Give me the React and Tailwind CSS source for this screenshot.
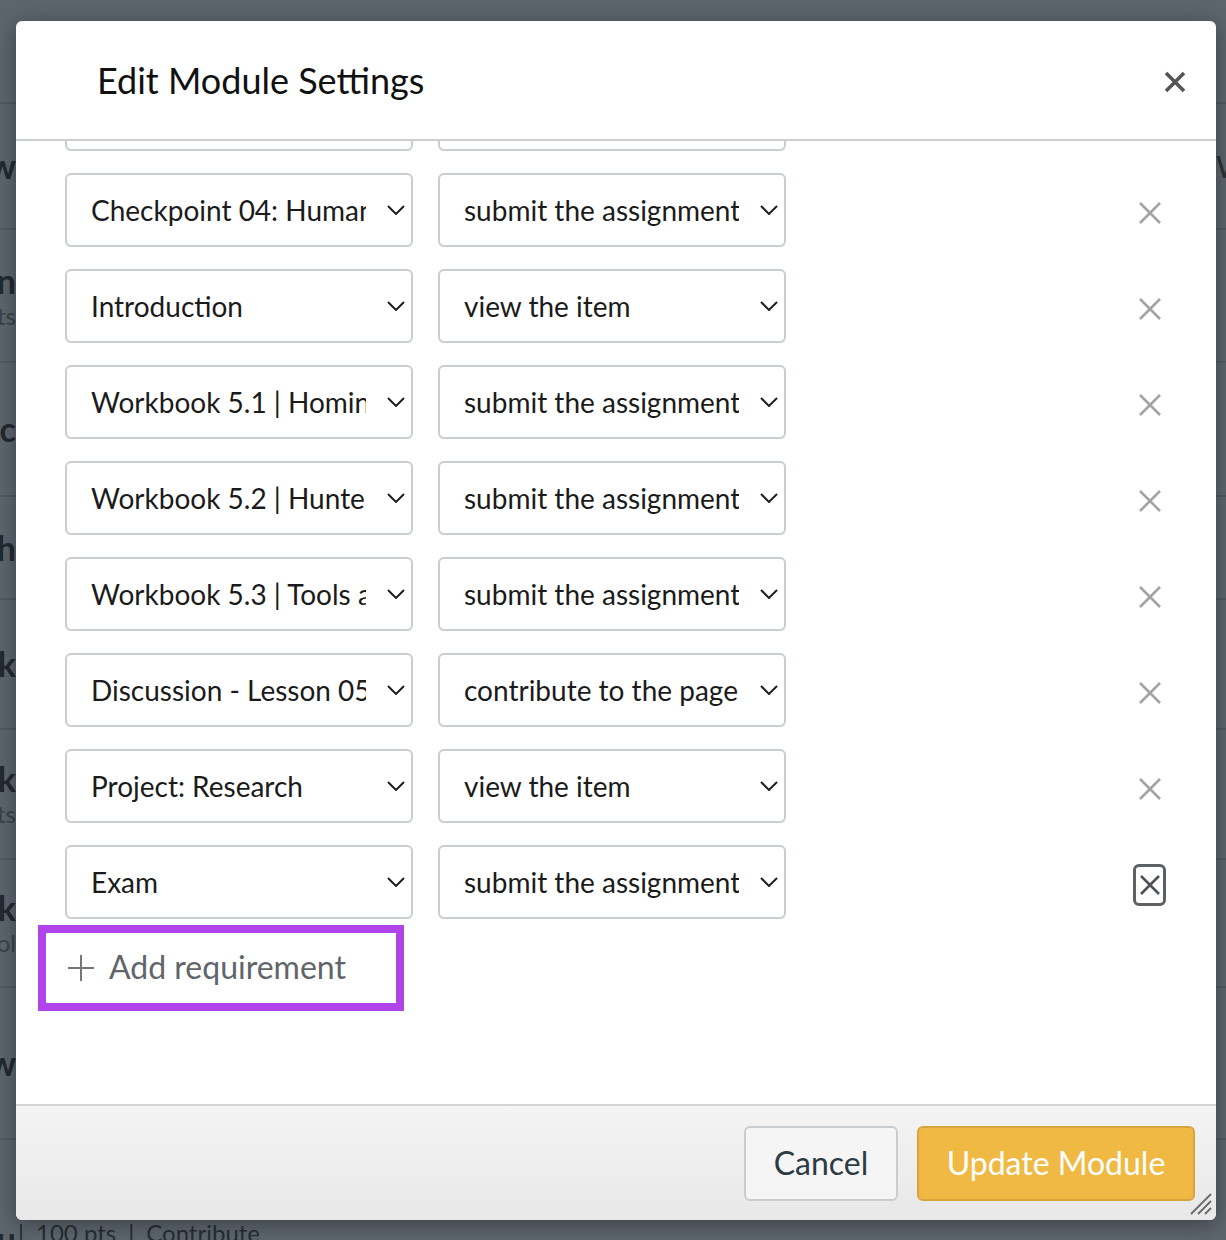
import React from "react";

const bgRows = [
  { h: 104, left: "", sub: "", right: "" },
  { h: 126, left: "Overview", sub: "", right: "Wi" },
  { h: 133, left: "Checkpoint 04: Human", sub: "10 pts", right: "" },
  { h: 134, left: "Introduc", sub: "", right: "" },
  { h: 103, left: "Research", sub: "", right: "" },
  { h: 130, left: "Workbook", sub: "", right: "" },
  { h: 130, left: "Work", sub: "pts", right: "" },
  { h: 128, left: "Work", sub: "Tool", right: "" },
  { h: 152, left: "Overview", sub: "", right: "" },
  { h: 200, left: "Discu", sub: "", right: "" },
];

const requirements = [
  ["Checkpoint 04: Human Factors", "submit the assignment"],
  ["Checkpoint 04: Human Factors", "submit the assignment"],
  ["Introduction", "view the item"],
  ["Workbook 5.1 | Homing", "submit the assignment"],
  ["Workbook 5.2 | Hunter", "submit the assignment"],
  ["Workbook 5.3 | Tools and", "submit the assignment"],
  ["Discussion - Lesson 05", "contribute to the page"],
  ["Project: Research", "view the item"],
  ["Exam", "submit the assignment"],
];

const Chevron = () => (
  <svg width="18" height="10" viewBox="0 0 18 10" className="shrink-0">
    <polyline points="1,1 9,9 17,1" fill="none" stroke="#1f1f1f" strokeWidth="2" />
  </svg>
);

const Select = ({ value }) => (
  <div className="w-[348px] h-[74px] shrink-0 flex items-center border-2 border-[#c8cdd0] rounded-md bg-white pl-[24px] pr-[6px]">
    <span className="flex-1 overflow-hidden whitespace-nowrap text-[28px] text-[#1b1b1b] mr-[21px]">
      {value}
    </span>
    <Chevron />
  </div>
);

const RemoveIcon = ({ focused }) =>
  focused ? (
    <div className="w-[33px] h-[42px] border-[3px] border-[#5d6166] rounded-[6px] flex items-center justify-center">
      <svg width="22" height="22" viewBox="0 0 22 22">
        <path d="M2 2 L20 20 M20 2 L2 20" stroke="#4d5156" strokeWidth="2.6" />
      </svg>
    </div>
  ) : (
    <svg width="22" height="22" viewBox="0 0 22 22">
      <path d="M1 1 L21 21 M21 1 L1 21" stroke="#a3a3a3" strokeWidth="2.6" />
    </svg>
  );

export default function App() {
  return (
    <div
      className="relative w-[1226px] h-[1240px] overflow-hidden bg-[#5c646c]"
      style={{ fontFamily: "Lato, 'Open Sans', sans-serif" }}
    >
      {/* dimmed page behind the dialog */}
      <div className="flex flex-col">
        {bgRows.map((r, i) => (
          <div
            key={i}
            className="flex border-b-2 border-[#525960]"
            style={{ height: r.h }}
          >
            <div className="w-[16px] overflow-hidden flex flex-col items-end justify-center">
              <span className="whitespace-nowrap text-[34px] font-bold text-[#22292f] leading-[40px]">
                {r.left}
              </span>
              {r.sub && (
                <span className="whitespace-nowrap text-[24px] text-[#3a4148] leading-[30px]">
                  {r.sub}
                </span>
              )}
            </div>
            <div className="flex-1" />
            <div className="w-[10px] overflow-hidden flex items-center">
              <span className="whitespace-nowrap text-[30px] text-[#2a3137]">{r.right}</span>
            </div>
          </div>
        ))}
      </div>
      <div className="absolute left-[18px] top-[1215px] flex items-center gap-[12px] text-[24px] text-[#262d33] whitespace-nowrap">
        <span>|</span>
        <span>100 pts</span>
        <span>|</span>
        <span>Contribute</span>
      </div>

      {/* dialog */}
      <div className="absolute left-[16px] top-[21px] w-[1200px] h-[1199px] bg-white rounded-md shadow-[0_4px_20px_rgba(0,0,0,0.35)] flex flex-col overflow-hidden">
        <div className="h-[120px] shrink-0 flex items-center justify-between pl-[81px] pr-[30px] border-b-2 border-[#c7cdd1]">
          <h2 className="text-[36px] text-[#111] font-normal">Edit Module Settings</h2>
          <svg width="22" height="22" viewBox="0 0 22 22" className="mt-[3px]">
            <path d="M2 2 L20 20 M20 2 L2 20" stroke="#555" strokeWidth="3.6" />
          </svg>
        </div>

        <div className="flex-1 overflow-hidden">
          <div className="-mt-[64px] flex flex-col gap-[22px] pl-[49px]">
            {requirements.map(([item, action], i) => (
              <div key={i} className="flex items-center">
                <Select value={item} />
                <div className="ml-[25px]">
                  <Select value={action} />
                </div>
                <div className="ml-[347px] w-[33px] flex justify-center pt-[6px]">
                  <RemoveIcon focused={i === requirements.length - 1} />
                </div>
              </div>
            ))}
          </div>
          <div className="mt-[6px] ml-[22px] w-[366px] h-[86px] border-[8px] border-[#b044e8] flex items-center pl-[21px] gap-[14px]">
            <svg width="28" height="28" viewBox="0 0 28 28">
              <path d="M14 1 V27 M1 14 H27" stroke="#777" strokeWidth="2" />
            </svg>
            <span className="text-[32px] text-[#5f656a] whitespace-nowrap -mt-[3px]">Add requirement</span>
          </div>
        </div>

        <div className="relative h-[116px] shrink-0 border-t-2 border-[#d0d4d7] bg-gradient-to-b from-[#f4f4f4] to-[#e8e8e8] flex items-center justify-end gap-[19px] pr-[21px]">
          <button className="w-[154px] h-[75px] rounded-md border-2 border-[#c7cdd1] bg-[#f5f5f5] text-[32px] text-[#2d3b45]">
            Cancel
          </button>
          <button className="w-[278px] h-[75px] rounded-md border-2 border-[#d8a43b] bg-[#f0b944] text-[32px] text-white">
            Update Module
          </button>
          <svg width="26" height="26" viewBox="0 0 26 26" className="absolute right-[3px] bottom-[4px]">
            <path d="M24 4 L4 24 M24 11 L11 24 M24 18 L18 24" stroke="#6a6a6a" strokeWidth="1.8" />
          </svg>
        </div>
      </div>
    </div>
  );
}
